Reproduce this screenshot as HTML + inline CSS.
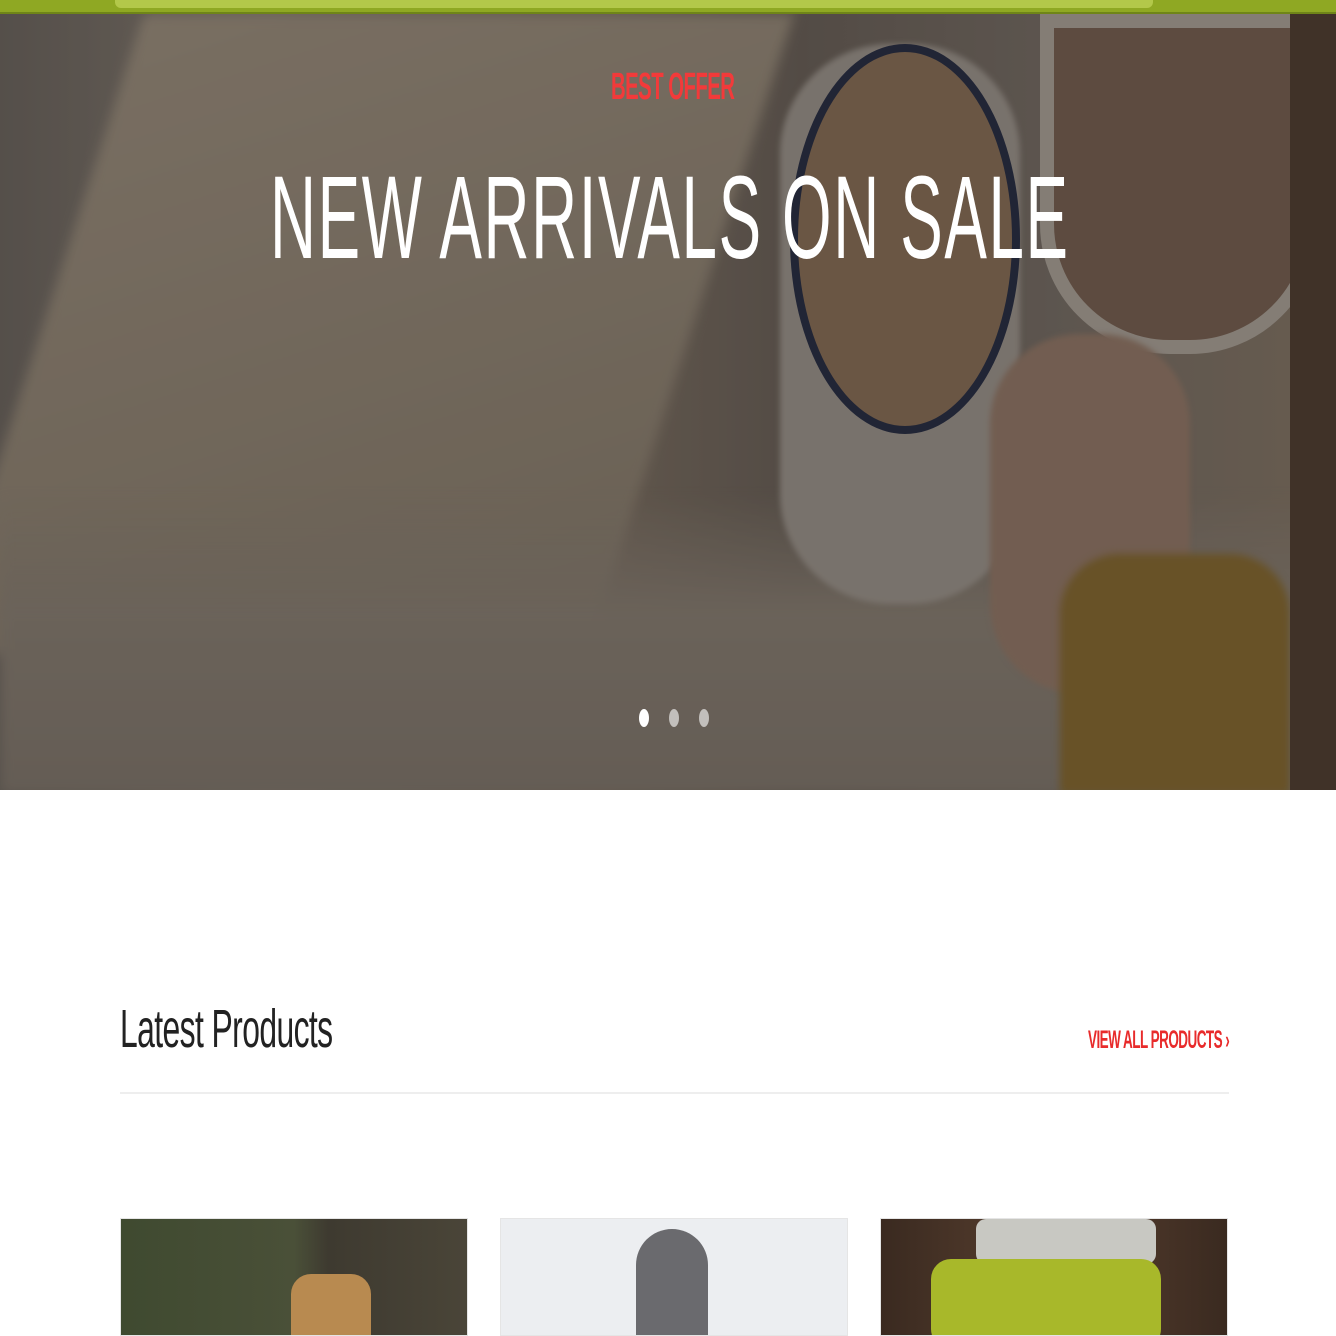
<!DOCTYPE html>
<html><head><meta charset="utf-8"><style>
*{margin:0;padding:0;box-sizing:border-box}
body{width:1336px;height:1336px;overflow:hidden;background:#fff;font-family:"Liberation Sans",sans-serif;position:relative}
.top{position:absolute;left:0;top:0;width:1336px;height:14px;background:#8fa823;border-bottom:2px solid #6f8518}
.top i{position:absolute;left:115px;top:0;width:1038px;height:8px;background:#b3c84a;border-radius:0 0 6px 6px}
.hero{position:absolute;left:0;top:14px;width:1336px;height:776px;overflow:hidden;background:#5a5048}
.hero div{position:absolute}
.ov{inset:0;background:rgba(40,36,34,.35)}
.t1{position:absolute;left:611px;top:52px;color:#f23a3a;font-weight:bold;font-size:38px;transform:scaleX(.535);transform-origin:left;letter-spacing:-1px;white-space:nowrap}
.t2{position:absolute;left:270px;top:139px;color:#fff;font-size:118px;transform:scaleX(.54);transform-origin:left;letter-spacing:3px;line-height:130px;white-space:nowrap}
.dot{position:absolute;top:695px;width:10px;height:18px;border-radius:50%;background:rgba(255,255,255,.6)}
h2{position:absolute;left:120px;top:998px;font-weight:normal;font-size:54px;color:#222;transform:scaleX(.59);transform-origin:left;letter-spacing:-1px;white-space:nowrap}
.va{position:absolute;left:1088px;top:1026px;color:#e82b2b;font-weight:bold;font-size:25px;transform:scaleX(.54);transform-origin:left;letter-spacing:-1px;white-space:nowrap}
.line{position:absolute;left:120px;top:1092px;width:1109px;height:2px;background:#eee}
.card{position:absolute;top:1218px;width:348px;height:118px;border:1px solid #e5e5e5;overflow:hidden}
</style></head><body>
<div class="top"><i></i></div>
<div class="hero">
 <div style="inset:0;background:linear-gradient(90deg,#6d6660 0%,#8a7f74 20%,#7f7163 45%,#6a6058 60%,#7a7068 80%,#8a7a68 100%)"></div>
 <div style="left:40px;top:0;width:650px;height:640px;background:linear-gradient(160deg,#a49684,#8e8170);filter:blur(6px);transform:skewX(-18deg)"></div>
 <div style="left:0;top:480px;width:1336px;height:300px;background:linear-gradient(180deg,rgba(130,120,110,0) 0%,#8f8478 40%,#857b70 100%);filter:blur(6px)"></div>
 <div style="left:780px;top:30px;width:240px;height:560px;border-radius:110px;background:#a49c94;filter:blur(3px)"></div>
 <div style="left:790px;top:30px;width:230px;height:390px;border-radius:50%;border:8px solid #1e2540;background:#8e7156"></div>
 <div style="left:1040px;top:0;width:280px;height:340px;border-radius:0 0 130px 130px;background:#7a6050;border:14px solid #b5aca2"></div>
 <div style="left:990px;top:320px;width:200px;height:360px;border-radius:90px;background:#9a7c6a;filter:blur(3px)"></div>
 <div style="left:1060px;top:540px;width:230px;height:240px;border-radius:60px 60px 0 0;background:#8a6a2a;filter:blur(4px)"></div>
 <div style="left:1290px;top:0;width:46px;height:776px;background:#4e3a2c"></div>
 <div class="ov"></div>
 <div class="t1">BEST OFFER</div>
 <div class="t2">NEW ARRIVALS ON SALE</div>
 <div class="dot" style="left:639px;background:#fff"></div>
 <div class="dot" style="left:669px"></div>
 <div class="dot" style="left:699px"></div>
</div>
<h2>Latest Products</h2>
<div class="va">VIEW ALL PRODUCTS ›</div>
<div class="line"></div>
<div class="card" style="left:120px;background:linear-gradient(90deg,#3f4a30 0%,#4a5038 50%,#3e3a30 60%,#4a4538 100%)"><div style="position:absolute;left:170px;top:55px;width:80px;height:70px;background:#b88a50;border-radius:20px 20px 0 0"></div></div>
<div class="card" style="left:500px;background:#eceef1"><div style="position:absolute;left:135px;top:10px;width:72px;height:120px;border-radius:36px 36px 0 0;background:#6a6a6e"></div></div>
<div class="card" style="left:880px;background:linear-gradient(90deg,#3a2a20,#5a4030 50%,#3a2a20)"><div style="position:absolute;left:95px;top:0;width:180px;height:45px;background:#c8c8c2;border-radius:10px"></div><div style="position:absolute;left:50px;top:40px;width:230px;height:90px;background:#a8b82a;border-radius:20px"></div></div>
</body></html>
